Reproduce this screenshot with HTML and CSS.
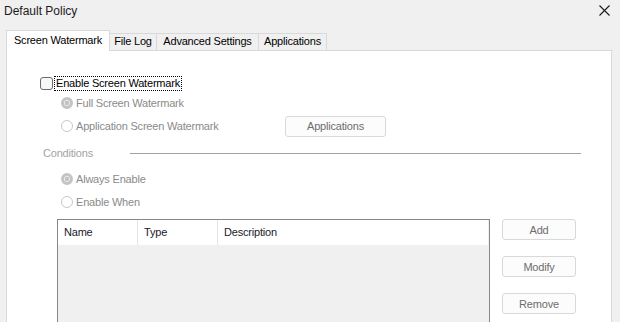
FILE: index.html
```html
<!DOCTYPE html>
<html lang="en">
<head>
    <meta charset="UTF-8">
    <title>Default Policy</title>
    <link rel="stylesheet" href="styles.css">
</head>
<body>
    <div class="titlebar">
        <span class="title">Default Policy</span>
        <svg class="close" width="11" height="11" viewBox="0 0 11 11">
            <path d="M0.5 0.5 L10.5 10.5 M10.5 0.5 L0.5 10.5" stroke="#1a1a1a" stroke-width="1.1" fill="none"/>
        </svg>
    </div>

    <div class="tabs">
        <div class="tab tab-active tab-w1">Screen Watermark</div>
        <div class="tab tab-w2">File Log</div>
        <div class="tab tab-w3">Advanced Settings</div>
        <div class="tab tab-w4">Applications</div>
    </div>

    <div class="panel">
        <div class="row">
            <span class="checkbox"></span>
            <span class="focus-label">Enable Screen Watermark</span>
        </div>

        <div class="row indent">
            <span class="radio radio-on"></span>
            <span class="muted">Full Screen Watermark</span>
        </div>

        <div class="row row-app indent">
            <div class="radio-group">
                <span class="radio"></span>
                <span class="muted">Application Screen Watermark</span>
            </div>
            <button class="btn btn-apps">Applications</button>
        </div>

        <div class="row row-cond">
            <span class="cond-label">Conditions</span>
            <span class="cond-line"></span>
        </div>

        <div class="row row-always indent">
            <span class="radio radio-on"></span>
            <span class="muted">Always Enable</span>
        </div>

        <div class="row row-when indent">
            <span class="radio"></span>
            <span class="muted">Enable When</span>
        </div>

        <div class="list-area">
            <div class="listview">
                <div class="list-header">
                    <div class="col col-name">Name</div>
                    <div class="col col-type">Type</div>
                    <div class="col col-desc">Description</div>
                </div>
            </div>
            <div class="side-buttons">
                <button class="btn btn-side">Add</button>
                <button class="btn btn-side">Modify</button>
                <button class="btn btn-side">Remove</button>
            </div>
        </div>
    </div>
</body>
</html>
```

FILE: styles.css
```css
body {
    margin: 0;
    padding: 0;
    background-color: #f0f0f0;
    font-family: "Liberation Sans", Arial, sans-serif;
    font-size: 11px;
    letter-spacing: -0.2px;
    color: #000;
    overflow: hidden;
    height: 322px;
}
.titlebar {
    height: 30px;
    display: flex;
    align-items: flex-start;
    justify-content: space-between;
}
.title {
    font-size: 12px;
    letter-spacing: 0;
    margin: 4px 0 0 4px;
    color: #1a1a1a;
}
.close {
    margin: 5px 10px 0 0;
}

/* tabs */
.tabs {
    display: flex;
    align-items: flex-end;
    margin-left: 6px;
    height: 20px;
    position: relative;
    z-index: 1;
}
.tab {
    box-sizing: border-box;
    height: 17px;
    line-height: 15px;
    text-align: center;
    border: 1px solid #d9d9d9;
    border-bottom: none;
    border-left: none;
    background-color: #f0f0f0;
}
.tab-active {
    height: 21px;
    line-height: 18px;
    margin-bottom: -1px;
    background-color: #fff;
    border-left: 1px solid #d9d9d9;
}
.tab-w1 { width: 104px; }
.tab-w2 { width: 47px; }
.tab-w3 { width: 102px; }
.tab-w4 { width: 68px; }

/* panel */
.panel {
    margin: 0 8px 0 6px;
    height: 272px;
    background-color: #fff;
    border: 1px solid #d9d9d9;
    border-bottom: none;
    box-sizing: border-box;
    padding: 22px 0 0 33px;
}
.row {
    display: flex;
    align-items: center;
    height: 20px;
}
.indent {
    padding-left: 21px;
}
.checkbox {
    box-sizing: border-box;
    width: 13px;
    height: 13px;
    border: 1px solid #6b6b6b;
    border-radius: 3px;
    background-color: #f7f7f7;
    margin-right: 2px;
}
.focus-label {
    outline: 1px dotted #000;
    padding: 0 1px;
    line-height: 13px;
}
.radio {
    box-sizing: border-box;
    width: 12px;
    height: 12px;
    border-radius: 50%;
    border: 1px solid #c8c8c8;
    background-color: #fff;
    margin-right: 3px;
}
.radio-on {
    border: 3px solid #c4c4c4;
    background: radial-gradient(circle, #c4c4c4 0 2px, #ececec 2.5px);
}
.muted {
    color: #8a8a8a;
}
.row-app {
    height: 22px;
    margin-top: 2px;
}
.radio-group {
    display: flex;
    align-items: center;
    width: 224px;
}
.btn {
    box-sizing: border-box;
    font-family: "Liberation Sans", Arial, sans-serif;
    font-size: 11px;
    letter-spacing: -0.2px;
    color: #6d6d6d;
    background-color: #fcfcfc;
    border: 1px solid #d9d9d9;
    border-radius: 3px;
    padding: 0;
}
.btn-apps {
    width: 101px;
    height: 21px;
}
.row-cond {
    margin-top: 6px;
    padding-left: 3px;
}
.cond-label {
    width: 87px;
    color: #a3a3a3;
}
.cond-line {
    width: 451px;
    height: 1px;
    background-color: #a0a0a0;
}
.row-always {
    margin-top: 6px;
}
.row-when {
    margin-top: 3px;
}

/* list */
.list-area {
    display: flex;
    margin: 7px 0 0 17px;
}
.listview {
    box-sizing: border-box;
    width: 433px;
    height: 103px;
    border: 1px solid #828790;
    border-bottom: none;
    background-color: #f0f0f0;
}
.list-header {
    display: flex;
    height: 25px;
    background-color: #fff;
    margin-right: 1px;
}
.col {
    box-sizing: border-box;
    line-height: 25px;
    padding-left: 6px;
    color: #1a1a2a;
}
.col-name {
    width: 80px;
    border-right: 1px solid #e5e5e5;
}
.col-type {
    width: 80px;
    border-right: 1px solid #e5e5e5;
}
.col-desc {
    flex: 1;
}
.side-buttons {
    display: flex;
    flex-direction: column;
    gap: 16px;
    margin-left: 12px;
}
.btn-side {
    width: 74px;
    height: 21px;
}
```
